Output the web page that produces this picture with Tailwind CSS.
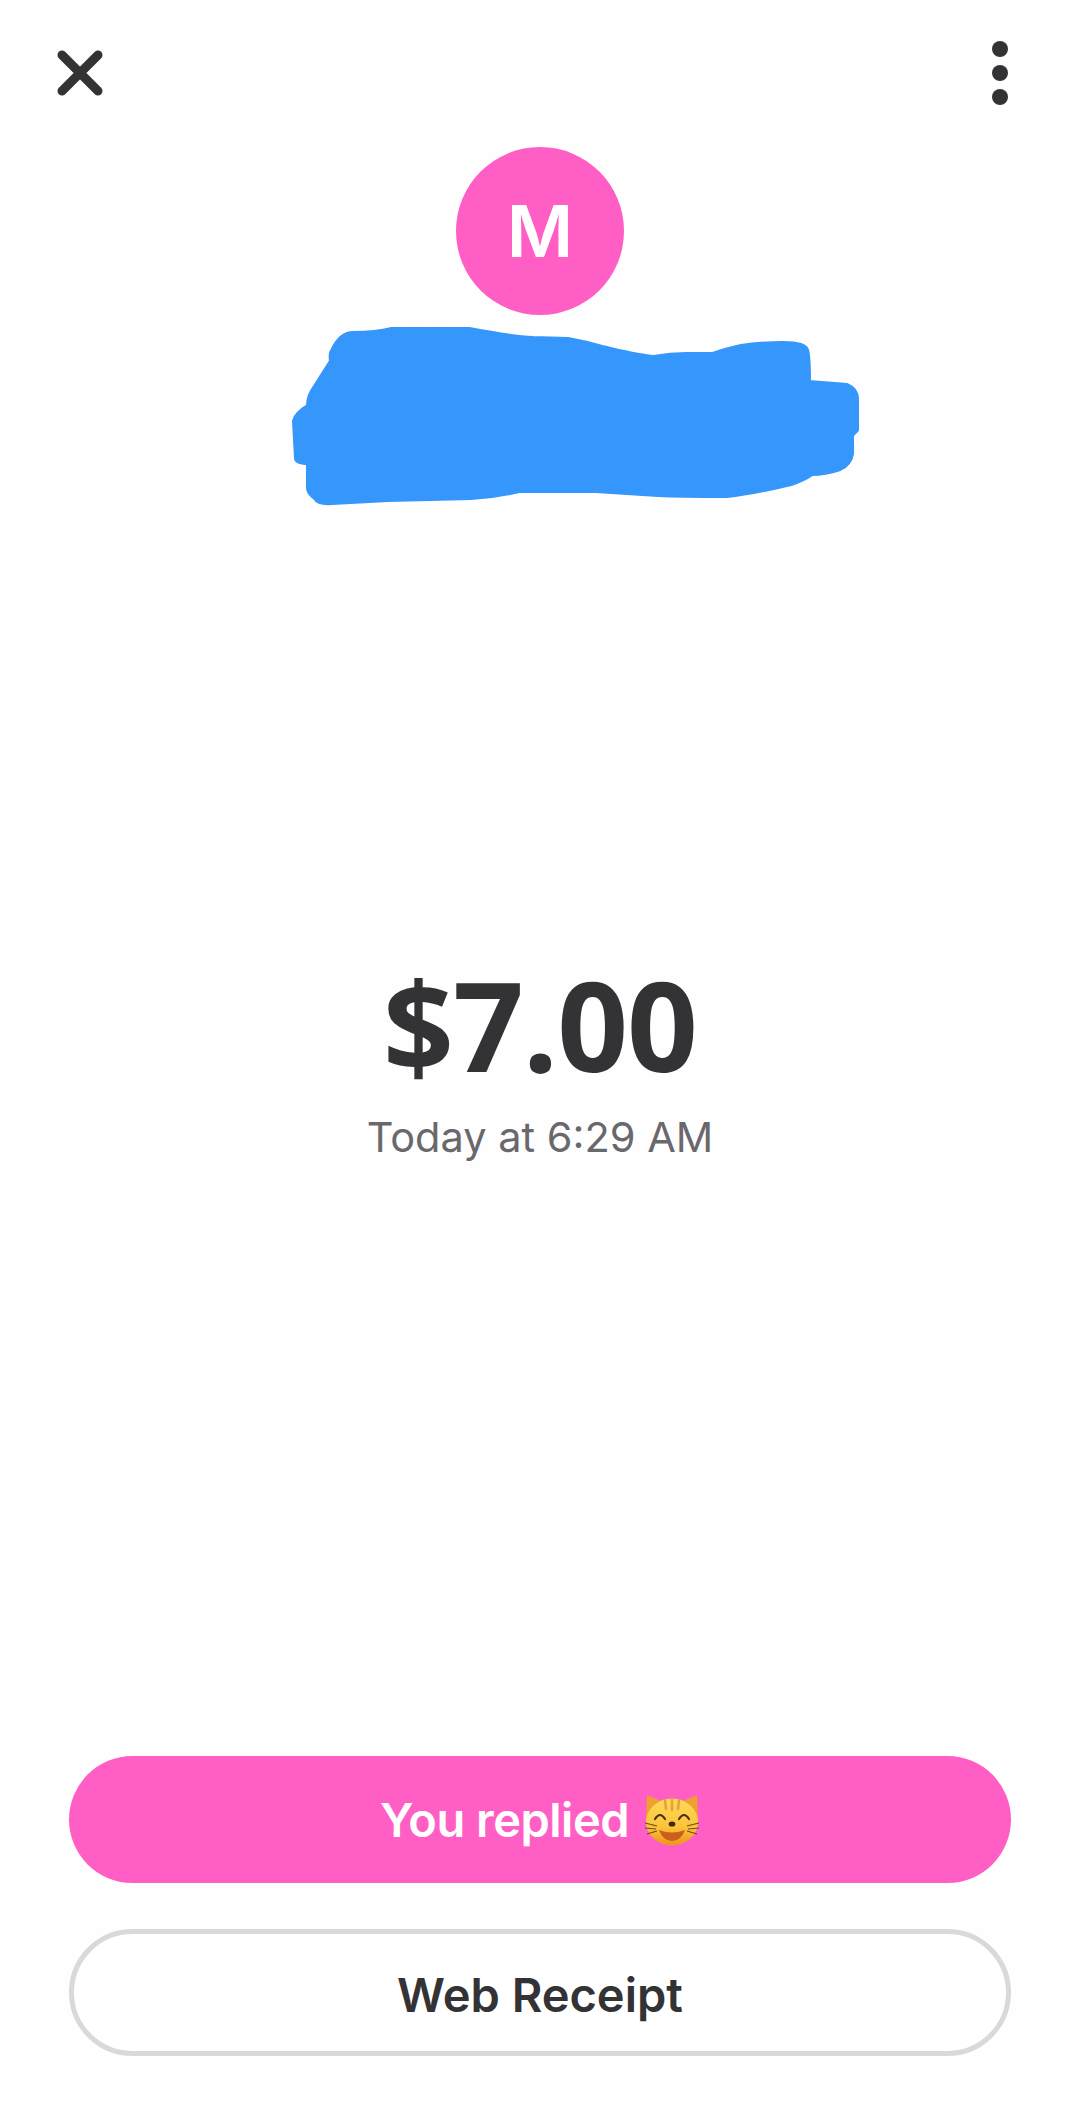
<!DOCTYPE html>
<html lang="en">
<head>
  <meta charset="UTF-8" />
  <meta name="viewport" content="width=device-width, initial-scale=1.0"/>
  <title>Payment</title>
  <script src="https://cdn.jsdelivr.net/npm/@tailwindcss/browser@4"></script>
</head>
<body class="bg-[#fefefe] font-['Inter',sans-serif] text-[#333235]">
  <main class="h-[2126px] w-[1080px] flex flex-col overflow-hidden">
    <!-- top bar -->
    <header class="h-[104px] pt-[41px] pl-[57px] pr-[72px] flex justify-between items-start shrink-0">
      <svg class="mt-[9px] w-[46px] h-[46px]" viewBox="0 0 46 46" fill="none" stroke="#333235" stroke-width="9" stroke-linecap="round">
        <path d="M5 5 L41 41 M41 5 L5 41"/>
      </svg>
      <div class="flex flex-col gap-[8px] w-[16px]">
        <span class="w-[16px] h-[16px] rounded-full bg-[#333235]"></span>
        <span class="w-[16px] h-[16px] rounded-full bg-[#333235]"></span>
        <span class="w-[16px] h-[16px] rounded-full bg-[#333235]"></span>
      </div>
    </header>

    <!-- avatar -->
    <div class="mt-[43px] w-[168px] h-[168px] self-center shrink-0 rounded-full bg-[#ff5fc4] text-white flex items-center justify-center text-[72px] font-semibold leading-none">M</div>

    <!-- scribbled-out name -->
    <svg class="block mt-[12px] shrink-0" width="1080" height="180" viewBox="0 322 1080 180" fill="#3596fb" stroke="#3596fb" stroke-width="4" stroke-linejoin="round">
      <path d="M353 328 C370 328 385 326 395 323 Q410 320 429 320 Q450 320 464 323 C490 328 515 332 533 333 L568 334 Q585 337 602 342 C620 346 640 351 654 352 Q670 349 686 349 L713 349 Q727 344 741 341 Q760 338 783 338 Q805 338 807 345 Q809 352 809 377 L847 380 Q857 384 857 394 L857 425 L852 430 L852 449 Q850 460 840 464 Q825 469 812 469 Q803 475 791 479 C770 484 745 489 727 491 C700 491 680 491 658 490 L596 486 L519 486 Q495 492 471 493 L388 495 L332 498 Q318 499 315 493 Q308 488 308 483 L308 458 Q296 458 296 453 L294 416 Q296 408 308 401 Q308 393 312 386 L331 356 Q330 348 332 346 Q340 328 353 328 Z"/>
    </svg>

    <!-- amount -->
    <section class="mt-[455px] flex flex-col items-center shrink-0">
      <div class="font-['Open_Sans',sans-serif] font-bold text-[124px] leading-[124px] tracking-[-1px]">$7.00</div>
      <div class="mt-[26px] text-[41.5px] leading-[50px] text-[#69686c]">Today at 6:29 AM</div>
    </section>

    <!-- actions -->
    <div class="mt-auto mb-[70px] px-[69px] flex flex-col gap-[46px] shrink-0">
      <button class="h-[127px] rounded-full bg-[#ff5fc4] text-white text-[47px] font-semibold tracking-[-0.5px] leading-none flex items-center justify-center gap-[15px]">
        <span>You replied</span>
        <svg class="w-[56px] h-[52px]" viewBox="0 0 56 52">
          <defs>
            <linearGradient id="catFace" x1="0" y1="0" x2="0" y2="1">
              <stop offset="0" stop-color="#ffd95a"/>
              <stop offset="0.6" stop-color="#fcc33a"/>
              <stop offset="1" stop-color="#ef9320"/>
            </linearGradient>
          </defs>
          <path d="M3 2 Q2 1 5 2 L20 8 L36 8 L51 2 Q54 1 53 3 L54 26 L2 26 Z" fill="#f0a02e"/>
          <ellipse cx="28" cy="28" rx="26" ry="23.5" fill="url(#catFace)"/>
          <path d="M21 6 L22 15 M28 5 L28 16 M35 6 L34 15" stroke="#e9a03a" stroke-width="2.6" stroke-linecap="round"/>
          <path d="M11 25 Q16 17 21 25 M35 25 Q40 17 45 25" fill="none" stroke="#4a2f12" stroke-width="2.2" stroke-linecap="round"/>
          <ellipse cx="28" cy="30" rx="3.4" ry="2.6" fill="#3f2a10"/>
          <path d="M15 36 Q28 41 41 36 Q37 47 28 47 Q19 47 15 36 Z" fill="#c8601c"/>
          <path d="M1 29 L13 32 M1 34 L12 35 M3 40 L13 37 M55 29 L43 32 M55 34 L44 35 M53 40 L43 37" stroke="#6b4a14" stroke-width="1.1" fill="none"/>
        </svg>
      </button>
      <button class="h-[127px] rounded-full border-[5px] border-[#d9d9d9] bg-white text-[#333235] text-[47px] font-semibold leading-none pt-[3px] flex items-center justify-center">Web Receipt</button>
    </div>
  </main>
</body>
</html>
